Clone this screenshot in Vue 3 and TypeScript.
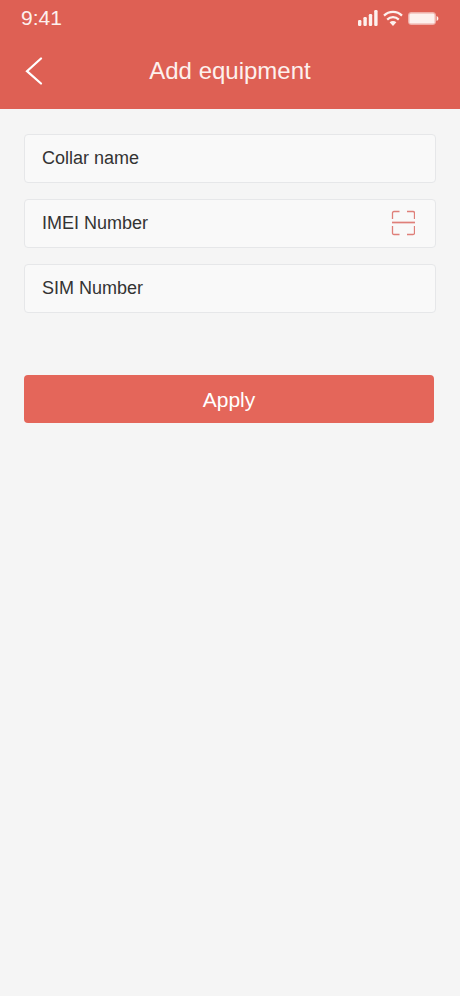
<script setup lang="ts">
import { reactive } from 'vue'

interface Field {
  id: 'collar' | 'imei' | 'sim'
  label: string
  numeric: boolean
  scan: boolean
}

const fields: Field[] = [
  { id: 'collar', label: 'Collar name', numeric: false, scan: false },
  { id: 'imei', label: 'IMEI Number', numeric: true, scan: true },
  { id: 'sim', label: 'SIM Number', numeric: true, scan: false },
]

const form = reactive<Record<Field['id'], string>>({ collar: '', imei: '', sim: '' })
</script>

<template>
  <div class="screen">
    <header class="header">
      <div class="status">
        <span class="time">9:41</span>
        <div class="indicators" aria-hidden="true">
          <svg width="20" height="16" viewBox="0 0 20 16" fill="currentColor">
            <rect x="0" y="10" width="3.4" height="6" rx="1.2" />
            <rect x="5.4" y="7" width="3.4" height="9" rx="1.2" />
            <rect x="10.8" y="4" width="3.4" height="12" rx="1.2" />
            <rect x="16.2" y="0" width="3.4" height="16" rx="1.2" />
          </svg>
          <svg width="20" height="16" viewBox="0 0 20 16" fill="none" stroke="currentColor">
            <path d="M1 5.6C6 .6 14 .6 19 5.6" stroke-width="2.2" />
            <path d="M4.2 9.6c3.300-3.300 8.300-3.300 11.600 0" stroke-width="2.2" />
            <path d="M6.600 12.200c2-1.700 4.800-1.700 6.800 0L10 16z" fill="currentColor" stroke="none" />
          </svg>
          <svg width="31" height="13" viewBox="0 0 31 13" fill="none">
            <rect x=".5" y=".5" width="27" height="12" rx="2.5" stroke="currentColor" stroke-opacity=".55" />
            <rect x="1.2" y="1.2" width="25.6" height="10.6" rx="1.5" fill="currentColor" />
            <path d="M28.600 4c2.400.8 2.400 4.200 0 5z" fill="currentColor" />
          </svg>
        </div>
      </div>
      <div class="nav">
        <button class="back" type="button" aria-label="Back">
          <svg width="18" height="28" viewBox="0 0 18 28" fill="none" stroke="currentColor" stroke-width="2.2">
            <path d="M16 1.500L2 14.200 16 26.500" stroke-linecap="round" />
          </svg>
        </button>
        <h1 class="title">Add equipment</h1>
      </div>
    </header>

    <form class="form" @submit.prevent>
      <div v-for="field in fields" :key="field.id" class="field">
        <label class="label" :for="field.id">{{ field.label }}</label>
        <input
          :id="field.id"
          v-model="form[field.id]"
          class="input"
          type="text"
          :inputmode="field.numeric ? 'numeric' : 'text'"
          autocomplete="off"
        />
        <button v-if="field.scan" class="scan" type="button" aria-label="Scan code">
          <svg width="24" height="26" viewBox="0 0 24 26" fill="none" stroke="currentColor" stroke-width="1.3">
            <path d="M1.500 9V3q0-1.500 1.500-1.500h5.500M16 1.500h6q1.500 0 1.500 1.500v6M23.500 16v7q0 1.500-1.500 1.500h-6M8.500 24.500H3q-1.500 0-1.500-1.500v-7" />
            <path d="M1 12.500h23" stroke-width="1.700" />
          </svg>
        </button>
      </div>
      <button class="apply" type="submit">Apply</button>
    </form>
  </div>
</template>

<style>
body {
  margin: 0;
  background: #f5f5f5;
}
</style>

<style scoped>
.screen {
  min-height: 100vh;
  background: #f5f5f5;
  color: #333;
  font-family: "Liberation Sans", Arial, sans-serif;
}

.header {
  background: #de6054;
  color: #fdf1ee;
  padding-bottom: 10px;
}

.status {
  display: flex;
  align-items: center;
  justify-content: space-between;
  height: 36px;
  padding: 0 21px;
}

.time {
  font-size: 21px;
  line-height: 24px;
}

.indicators {
  display: flex;
  align-items: center;
  gap: 5px;
}

.nav {
  display: grid;
  grid-template-columns: 44px 1fr 44px;
  align-items: center;
  height: 63px;
  padding: 6px 12px 0;
  box-sizing: border-box;
}

button {
  font-family: inherit;
  border: 0;
  cursor: pointer;
}

.back {
  display: flex;
  align-items: center;
  justify-content: center;
  height: 44px;
  padding: 0;
  background: none;
  color: #fff;
}

.title {
  margin: 0;
  font-size: 24px;
  line-height: 28px;
  font-weight: 400;
  text-align: center;
}

.form {
  display: flex;
  flex-direction: column;
  gap: 16px;
  padding: 25px 24px;
}

.field {
  display: flex;
  align-items: center;
  height: 49px;
  box-sizing: border-box;
  padding: 0 20px 2px 17px;
  border: 1px solid #e6e7e9;
  border-radius: 4px;
  background: #f9f9f9;
}

.label {
  font-size: 18px;
  line-height: 24px;
}

.input {
  flex: 1;
  min-width: 0;
  height: 24px;
  padding: 0 8px;
  border: 0;
  outline: 0;
  background: none;
  color: inherit;
  font: inherit;
}

.field:focus-within {
  border-color: #e4665a;
}

.scan {
  display: flex;
  padding: 0;
  background: none;
  color: #df7f79;
}

.apply {
  height: 48px;
  margin: 46px 2px 0 0;
  padding: 2px 0 0;
  border-radius: 4px;
  background: #e4665a;
  color: #fff;
  font-size: 21px;
  line-height: 28px;
}
</style>
